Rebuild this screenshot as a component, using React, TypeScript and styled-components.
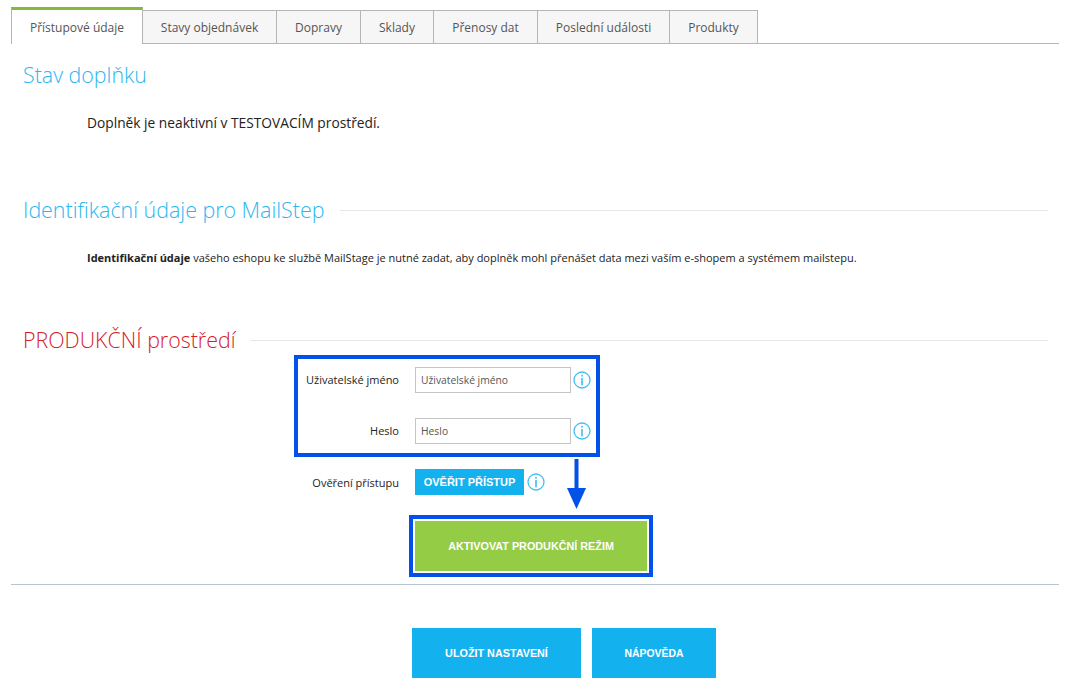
import React from "react";
import styled, { createGlobalStyle } from "styled-components";

const Global = createGlobalStyle`
  html, body { margin: 0; padding: 0; background: #fff; overflow: hidden; }
  body { font-family: "Open Sans", "Liberation Sans", sans-serif; color: #222; }
`;

const Page = styled.div`
  width: 1048px;
  margin-left: 11px;
  padding-top: 7px;
`;
const TabBar = styled.div`
  display: flex;
  height: 36px;
  border-bottom: 1px solid #b5b5b5;
`;
const Tab = styled.div<{ $w: number; $active?: boolean }>`
  box-sizing: border-box;
  width: ${(p) => p.$w}px;
  height: ${(p) => (p.$active ? 37 : 34)}px;
  margin-top: ${(p) => (p.$active ? 0 : 3)}px;
  display: flex;
  align-items: center;
  justify-content: center;
  font-size: 12px;
  color: #555;
  background: ${(p) => (p.$active ? "#fff" : "#f6f6f6")};
  border: 1px solid #b5b5b5;
  border-left-width: ${(p) => (p.$active ? 1 : 0)}px;
  border-top: ${(p) => (p.$active ? "3px solid #86b83a" : "1px solid #b5b5b5")};
  border-bottom: ${(p) => (p.$active ? "none" : "1px solid #b5b5b5")};
  padding-top: ${(p) => (p.$active ? 1 : 0)}px;
`;
const HeadingRow = styled.div<{ $top: number; $gap: number }>`
  display: flex;
  align-items: center;
  gap: ${(p) => p.$gap}px;
  margin: ${(p) => p.$top}px 11px 0 12px;
  height: 30px;
`;
const Heading = styled.h2<{ $red?: boolean }>`
  margin: 0;
  font-size: 21.4px;
  line-height: 30px;
  font-weight: 300;
  white-space: nowrap;
  color: ${(p) => (p.$red ? "#d6201f" : "#2ab7f0")};
`;
const HeadingRule = styled.div`
  flex: 1;
  height: 1px;
  background: #e6e6e6;
`;
const StatusText = styled.p`
  margin: 23px 0 0 76px;
  font-size: 13.75px;
  line-height: 20px;
  color: #222;
`;
const InfoText = styled.p`
  margin: 25px 0 0 76px;
  font-size: 11px;
  line-height: 16px;
  color: #222;
  b { font-weight: 700; }
`;
const FormArea = styled.div`
  position: relative;
  height: 221px;
`;
const CredentialsBox = styled.div`
  box-sizing: border-box;
  width: 306px;
  height: 102px;
  margin: 0 0 0 283px;
  border: 4px solid #0251e8;
  padding: 8px 0 0 0;
  display: flex;
  flex-direction: column;
  gap: 25px;
`;
const Row = styled.div`
  display: flex;
  align-items: center;
  height: 26px;
`;
const Label = styled.label<{ $w: number }>`
  width: ${(p) => p.$w}px;
  text-align: right;
  font-size: 11px;
  color: #222;
  margin-right: 16px;
  padding-bottom: 2px;
`;
const Input = styled.input`
  box-sizing: border-box;
  width: 156px;
  height: 26px;
  border: 1px solid #c4c4c4;
  padding: 0 5px 1px;
  font: 400 10.3px "Open Sans", sans-serif;
  color: #555;
  &::placeholder { color: #555; opacity: 1; }
`;
const Info = styled.svg`
  width: 18px;
  height: 18px;
  margin: 0 0 1px 2px;
  flex: none;
`;
const VerifyButton = styled.button`
  width: 109px;
  height: 26px;
  border: 0;
  padding: 0 0 1px;
  background: #14b1ef;
  color: #fff;
  font: 700 11px "Liberation Sans", Arial, sans-serif;
`;
const VerifyRow = styled(Row)`
  margin-top: 12px;
  margin-left: 287px;
  ${Label} { padding-bottom: 0; }
  ${Info} { margin-left: 3px; }
`;
const ActivateFrame = styled.div`
  box-sizing: border-box;
  width: 244px;
  height: 62px;
  margin: 20px 0 0 398px;
  border: 4px solid #0251e8;
  padding: 2px;
`;
const ActivateButton = styled.button`
  display: block;
  width: 100%;
  height: 100%;
  border: 0;
  padding: 0;
  background: #94cc46;
  color: #fff;
  font: 700 10.8px "Liberation Sans", Arial, sans-serif;
`;
const Arrow = styled.svg`
  position: absolute;
  left: 555px;
  top: 104px;
  width: 21px;
  height: 50px;
`;
const BottomRule = styled.div`
  height: 1px;
  background: #b9c5cd;
  margin-top: 8px;
`;
const Actions = styled.div`
  display: flex;
  gap: 11px;
  margin: 43px 0 0 401px;
`;
const ActionButton = styled.button<{ $w: number; $size: number }>`
  width: ${(p) => p.$w}px;
  height: 50px;
  border: 0;
  padding: 0;
  background: #14b1ef;
  color: #fff;
  font: 700 ${(p) => p.$size}px "Liberation Sans", Arial, sans-serif;
`;

const InfoIcon = () => (
  <Info viewBox="0 0 18 18" fill="none">
    <circle cx="9" cy="9" r="8" stroke="#3fbff3" strokeWidth="1.3" />
    <rect x="8.2" y="3.8" width="1.6" height="1.8" fill="#3fbff3" />
    <rect x="8.2" y="7" width="1.6" height="7.4" fill="#3fbff3" />
  </Info>
);

const tabs: [string, number][] = [
  ["Přístupové údaje", 132],
  ["Stavy objednávek", 134],
  ["Dopravy", 84],
  ["Sklady", 73],
  ["Přenosy dat", 104],
  ["Poslední události", 132],
  ["Produkty", 88],
];

export default function App() {
  return (
    <Page>
      <Global />
      <TabBar>
        {tabs.map(([t, w], i) => (
          <Tab key={t} $w={w} $active={i === 0}>{t}</Tab>
        ))}
      </TabBar>
      <HeadingRow $top={16} $gap={0}>
        <Heading>Stav doplňku</Heading>
      </HeadingRow>
      <StatusText>Doplněk je neaktivní v TESTOVACÍM prostředí.</StatusText>
      <HeadingRow $top={62} $gap={16}>
        <Heading>Identifikační údaje pro MailStep</Heading>
        <HeadingRule />
      </HeadingRow>
      <InfoText>
        <b>Identifikační údaje</b> vašeho eshopu ke službě MailStage je nutné zadat, aby doplněk mohl přenášet data mezi vaším e-shopem a systémem mailstepu.
      </InfoText>
      <HeadingRow $top={59} $gap={14}>
        <Heading $red>PRODUKČNÍ prostředí</Heading>
        <HeadingRule />
      </HeadingRow>
      <FormArea>
        <CredentialsBox>
          <Row>
            <Label $w={101}>Uživatelské jméno</Label>
            <Input placeholder="Uživatelské jméno" />
            <InfoIcon />
          </Row>
          <Row>
            <Label $w={101}>Heslo</Label>
            <Input placeholder="Heslo" />
            <InfoIcon />
          </Row>
        </CredentialsBox>
        <VerifyRow>
          <Label $w={101}>Ověření přístupu</Label>
          <VerifyButton>OVĚŘIT PŘÍSTUP</VerifyButton>
          <InfoIcon />
        </VerifyRow>
        <ActivateFrame>
          <ActivateButton>AKTIVOVAT PRODUKČNÍ REŽIM</ActivateButton>
        </ActivateFrame>
        <Arrow viewBox="0 0 21 50">
          <rect x="8.5" y="0" width="4" height="32" fill="#0251e8" />
          <polygon points="1,29 20,29 10.5,50" fill="#0251e8" />
        </Arrow>
      </FormArea>
      <BottomRule />
      <Actions>
        <ActionButton $w={169} $size={10.8}>ULOŽIT NASTAVENÍ</ActionButton>
        <ActionButton $w={124} $size={10.4}>NÁPOVĚDA</ActionButton>
      </Actions>
    </Page>
  );
}
